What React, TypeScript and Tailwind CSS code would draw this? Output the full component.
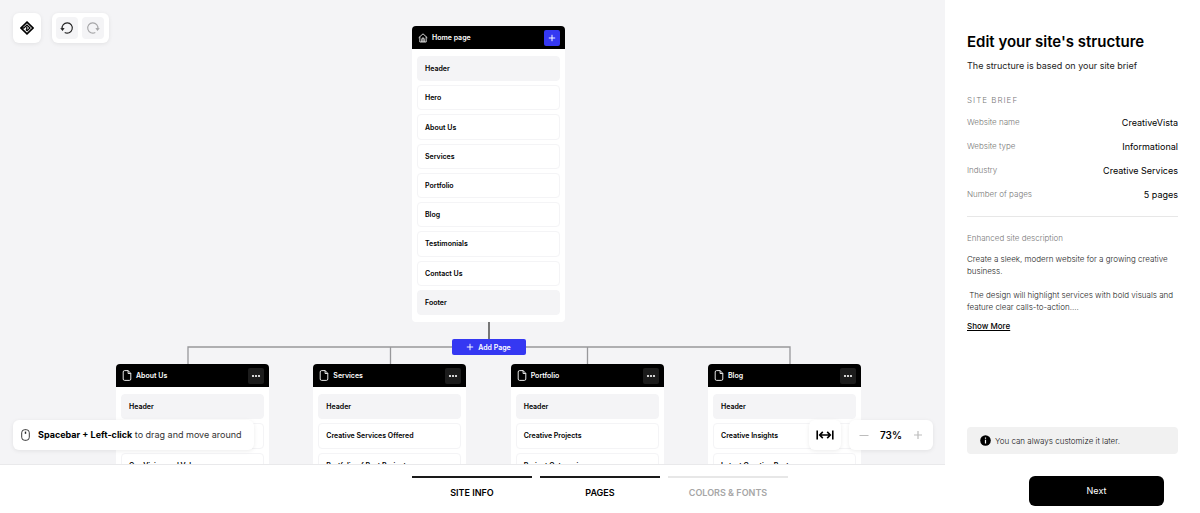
import type { ReactNode } from "react";

type CardProps = { title: string; sections: string[]; home?: boolean };

const pages: CardProps[] = [
  { title: "About Us", sections: ["Header", "Our Story", "Our Vision and Values"] },
  { title: "Services", sections: ["Header", "Creative Services Offered", "Portfolio of Past Projects"] },
  { title: "Portfolio", sections: ["Header", "Creative Projects", "Project Categories"] },
  { title: "Blog", sections: ["Header", "Creative Insights", "Latest Creative Posts"] },
];

const homeSections = ["Header", "Hero", "About Us", "Services", "Portfolio", "Blog", "Testimonials", "Contact Us", "Footer"];

const brief = [
  ["Website name", "CreativeVista"],
  ["Website type", "Informational"],
  ["Industry", "Creative Services"],
  ["Number of pages", "5 pages"],
];

function Plus({ className }: { className: string }) {
  return (
    <svg viewBox="0 0 10 10" className={className} fill="none" stroke="currentColor" strokeWidth="1.2" aria-hidden="true">
      <path d="M5 1v8M1 5h8" />
    </svg>
  );
}

function HomeIcon() {
  return (
    <svg viewBox="0 0 12 12" className="size-2.5 shrink-0" fill="none" stroke="currentColor" strokeWidth="1" aria-hidden="true">
      <path d="M.8 5.700 6 1l5.200 4.700M2.200 4.600v6.200h7.600V4.600M4.500 10.800V7.400a1.500 1.500 0 0 1 3 0v3.400M6 6.500v4.300" />
    </svg>
  );
}

function PageIcon() {
  return (
    <svg viewBox="0 0 10 12" className="h-3 w-2.5 shrink-0" fill="none" stroke="currentColor" strokeWidth="0.9" strokeLinejoin="round" aria-hidden="true">
      <path d="M2.600.6h3.600l2.600 2.800v5.600a1.400 1.400 0 0 1-1.400 1.400H2.600a1.400 1.400 0 0 1-1.400-1.400v-7A1.400 1.400 0 0 1 2.600.6ZM6.100.6v2.900h2.700" />
    </svg>
  );
}

function Card({ title, sections, home = false }: CardProps) {
  return (
    <article className="w-[153px] shrink-0 rounded bg-white">
      <header className="flex h-[23px] items-center justify-between rounded-t bg-black pr-[5px] pl-1.5 text-white">
        <h2 className="flex items-center gap-1 text-[7px] leading-3 font-semibold">
          {home ? <HomeIcon /> : <PageIcon />}
          <span className="pt-px">{title}</span>
        </h2>
        {home ? (
          <button aria-label="Add section" className="grid size-4 place-items-center rounded-xs bg-[#3538f2]">
            <Plus className="size-2" />
          </button>
        ) : (
          <button aria-label={`${title} options`} className="grid size-4 place-items-center rounded-xs bg-[#1c1c1c]">
            <svg viewBox="0 0 10 4" className="h-1 w-2.5" fill="currentColor" aria-hidden="true">
              <circle cx="2" cy="2" r="1.1" />
              <circle cx="5" cy="2" r="1.1" />
              <circle cx="8" cy="2" r="1.1" />
            </svg>
          </button>
        )}
      </header>
      <ul className={home ? "flex h-[273px] flex-col gap-1 px-[5px] py-[7px]" : "flex h-[98px] flex-col gap-1 px-[5px] py-[7px]"}>
        {sections.map((name) => (
          <li
            key={name}
            className={
              name === "Header" || name === "Footer"
                ? "flex flex-1 items-center rounded border border-[#f4f4f6] bg-[#f4f4f6] pt-px pl-[7px] text-[7px] leading-3 font-semibold"
                : "flex flex-1 items-center rounded border border-[#f4f4f6] pt-px pl-[7px] text-[7px] leading-3 font-semibold"
            }
          >
            {name}
          </li>
        ))}
      </ul>
    </article>
  );
}

function Panel({ children, className }: { children: ReactNode; className: string }) {
  return <div className={`flex items-center rounded-md bg-white shadow-[0_1px_4px_rgba(0,0,0,0.08)] ${className}`}>{children}</div>;
}

function Rotate({ className }: { className: string }) {
  return (
    <svg viewBox="0 0 14 14" className={className} fill="none" stroke="currentColor" strokeWidth="1.1" aria-hidden="true">
      <path d="M2.200 8A5.100 5.100 0 1 1 4.700 11.400" />
      <path d="m.2 7.200 4.400-.2-2 3Z" fill="currentColor" stroke="none" />
    </svg>
  );
}

export default function App() {
  return (
    <div className="flex h-screen flex-col overflow-hidden bg-white font-['Inter','Liberation_Sans',sans-serif] text-black">
      <div className="flex min-h-0 flex-1">
        <main className="relative flex-1 overflow-hidden border-b border-[#e9e9eb] bg-[#f4f4f6]">
          <div className="relative ml-[116px] flex w-[745px] flex-col items-center pt-[26px]">
            <svg viewBox="0 0 745 42" className="absolute top-[322px] left-0 h-[42px] w-[745px]" fill="none" aria-hidden="true">
              <path d="M72 42V25H674V42M274.500 25V42M471.500 25V42" stroke="#98989b" strokeWidth="1.3" />
              <path d="M373 0V18" stroke="#222" strokeWidth="1.2" />
            </svg>
            <Card title="Home page" sections={homeSections} home />
            <button className="relative mt-[17px] mb-[9px] flex h-4 w-[74px] items-center justify-center gap-1 rounded-xs bg-[#3538f2] text-[7px] leading-3 font-semibold text-white">
              <Plus className="size-2" />
              <span className="pt-px">Add Page</span>
            </button>
            <div className="flex w-full justify-between">
              {pages.map((page) => (
                <Card key={page.title} {...page} />
              ))}
            </div>
          </div>

          <div className="absolute top-[13px] left-[13px] flex gap-[11px]">
            <Panel className="h-[30px] w-7 justify-center">
              <svg viewBox="0 0 14 14" className="size-3.5" fill="none" stroke="#000" aria-label="Logo">
                <path d="M7 1.200 13 7 7 12.800 1 7Z" strokeWidth="1.700" />
                <path d="M1.500 7h2.300L7 4.100 10 7 7.200 9.700 5.800 8.400M6.800 5.800v2.600" strokeWidth="1.300" />
              </svg>
            </Panel>
            <Panel className="h-[30px] gap-1 pr-[5px] pl-1">
              <button aria-label="Undo" className="grid size-[22px] place-items-center rounded bg-[#f4f4f6] text-[#222]">
                <Rotate className="size-3.5" />
              </button>
              <button aria-label="Redo" className="grid size-[22px] place-items-center rounded bg-[#f4f4f6] text-[#a6a6a8]">
                <Rotate className="size-3.5 -scale-x-100" />
              </button>
            </Panel>
          </div>

          <div className="absolute bottom-3.5 left-[13px]">
            <Panel className="h-[30px] gap-2 pr-3 pl-2 text-[9px] text-[#333]">
              <svg viewBox="0 0 9 12" className="h-3 w-[9px]" fill="none" stroke="#222" aria-hidden="true">
                <rect x="0.700" y="0.700" width="7.600" height="10.600" rx="3" strokeWidth="0.900" />
                <path d="M4.500 2.600v2.200" strokeWidth="1.400" />
              </svg>
              <p>
                <b className="text-black">Spacebar + Left-click</b> to drag and move around
              </p>
            </Panel>
          </div>

          <div className="absolute right-3 bottom-3.5 flex gap-2">
            <Panel className="h-[30px] w-8 justify-center">
              <button aria-label="Fit to width">
                <svg viewBox="0 0 18 10" className="h-2.5 w-[18px]" fill="none" stroke="#000" strokeWidth="1.600" aria-hidden="true">
                  <path d="M1.200.5v9M16.800.5v9M3.800 5h10.400M6.800 1.900 3.700 5l3.100 3.100M11.200 1.900 14.300 5l-3.100 3.100" />
                </svg>
              </button>
            </Panel>
            <Panel className="h-[30px] w-[84px] justify-between px-2.5">
              <button aria-label="Zoom out" className="text-[#bdbdbd]">
                <svg viewBox="0 0 10 10" className="size-2.5" stroke="currentColor" aria-hidden="true">
                  <path d="M.5 5.500h9" />
                </svg>
              </button>
              <span className="text-[10px] font-semibold">73%</span>
              <button aria-label="Zoom in" className="text-[#bdbdbd]">
                <Plus className="size-2.5" />
              </button>
            </Panel>
          </div>
        </main>

        <aside className="flex w-[255px] shrink-0 flex-col pt-8 pr-[22px] pb-[11px] pl-[22px]">
          <h1 className="text-[15px] leading-5 font-semibold">Edit your site's structure</h1>
          <p className="mt-1.5 text-[9px] leading-4 text-[#222]">The structure is based on your site brief</p>
          <h2 className="mt-[18px] text-[8px] leading-4 font-light tracking-[1px] text-[#777]">SITE BRIEF</h2>
          <dl className="mt-1.5 flex flex-col gap-2">
            {brief.map(([label, value]) => (
              <div key={label} className="flex h-4 items-center justify-between">
                <dt className="text-[8px] font-light text-[#777]">{label}</dt>
                <dd className="pt-px text-[9px]">{value}</dd>
              </div>
            ))}
          </dl>
          <hr className="mt-3.5 border-[#e7e7e7]" />
          <h2 className="mt-[15px] text-[8px] leading-3 font-light text-[#777]">Enhanced site description</h2>
          <p className="mt-[9px] text-[8px] leading-3 font-light whitespace-pre-line text-[#222]">
            Create a sleek, modern website for a growing creative business.
            {"\n\n"}&nbsp;The design will highlight services with bold visuals and feature clear calls-to-action....
          </p>
          <a href="#description" className="mt-[7px] self-start text-[8px] leading-3 font-medium underline">
            Show More
          </a>
          <p className="mt-auto flex h-[27px] items-center gap-1 rounded bg-[#f1f1f1] px-[13px] text-[8px] font-light text-[#111]">
            <svg viewBox="0 0 11 11" className="size-[11px]" aria-hidden="true">
              <circle cx="5.500" cy="5.500" r="5.300" />
              <path d="M5.500 2.500v1.300M5.500 4.800v3.600" stroke="#fff" strokeWidth="1.200" />
            </svg>
            You can always customize it later.
          </p>
        </aside>
      </div>

      <footer className="grid h-12 grid-cols-[1fr_auto_1fr]">
        <nav className="col-start-2 flex gap-2 pt-[11px] text-[9px] font-semibold">
          <a href="#info" className="w-[120px] border-t-2 border-[#1a1a1a] pt-2 text-center">SITE INFO</a>
          <a href="#pages" className="w-[120px] border-t-2 border-[#1a1a1a] pt-2 text-center">PAGES</a>
          <a href="#colors" className="w-[120px] border-t-2 border-[#e7e7e7] pt-2 text-center text-[#a6a6a6]">COLORS &amp; FONTS</a>
        </nav>
        <button className="mt-[11px] mr-9 h-[30px] w-[135px] justify-self-end rounded-md bg-black text-[9px] text-white">Next</button>
      </footer>
    </div>
  );
}
